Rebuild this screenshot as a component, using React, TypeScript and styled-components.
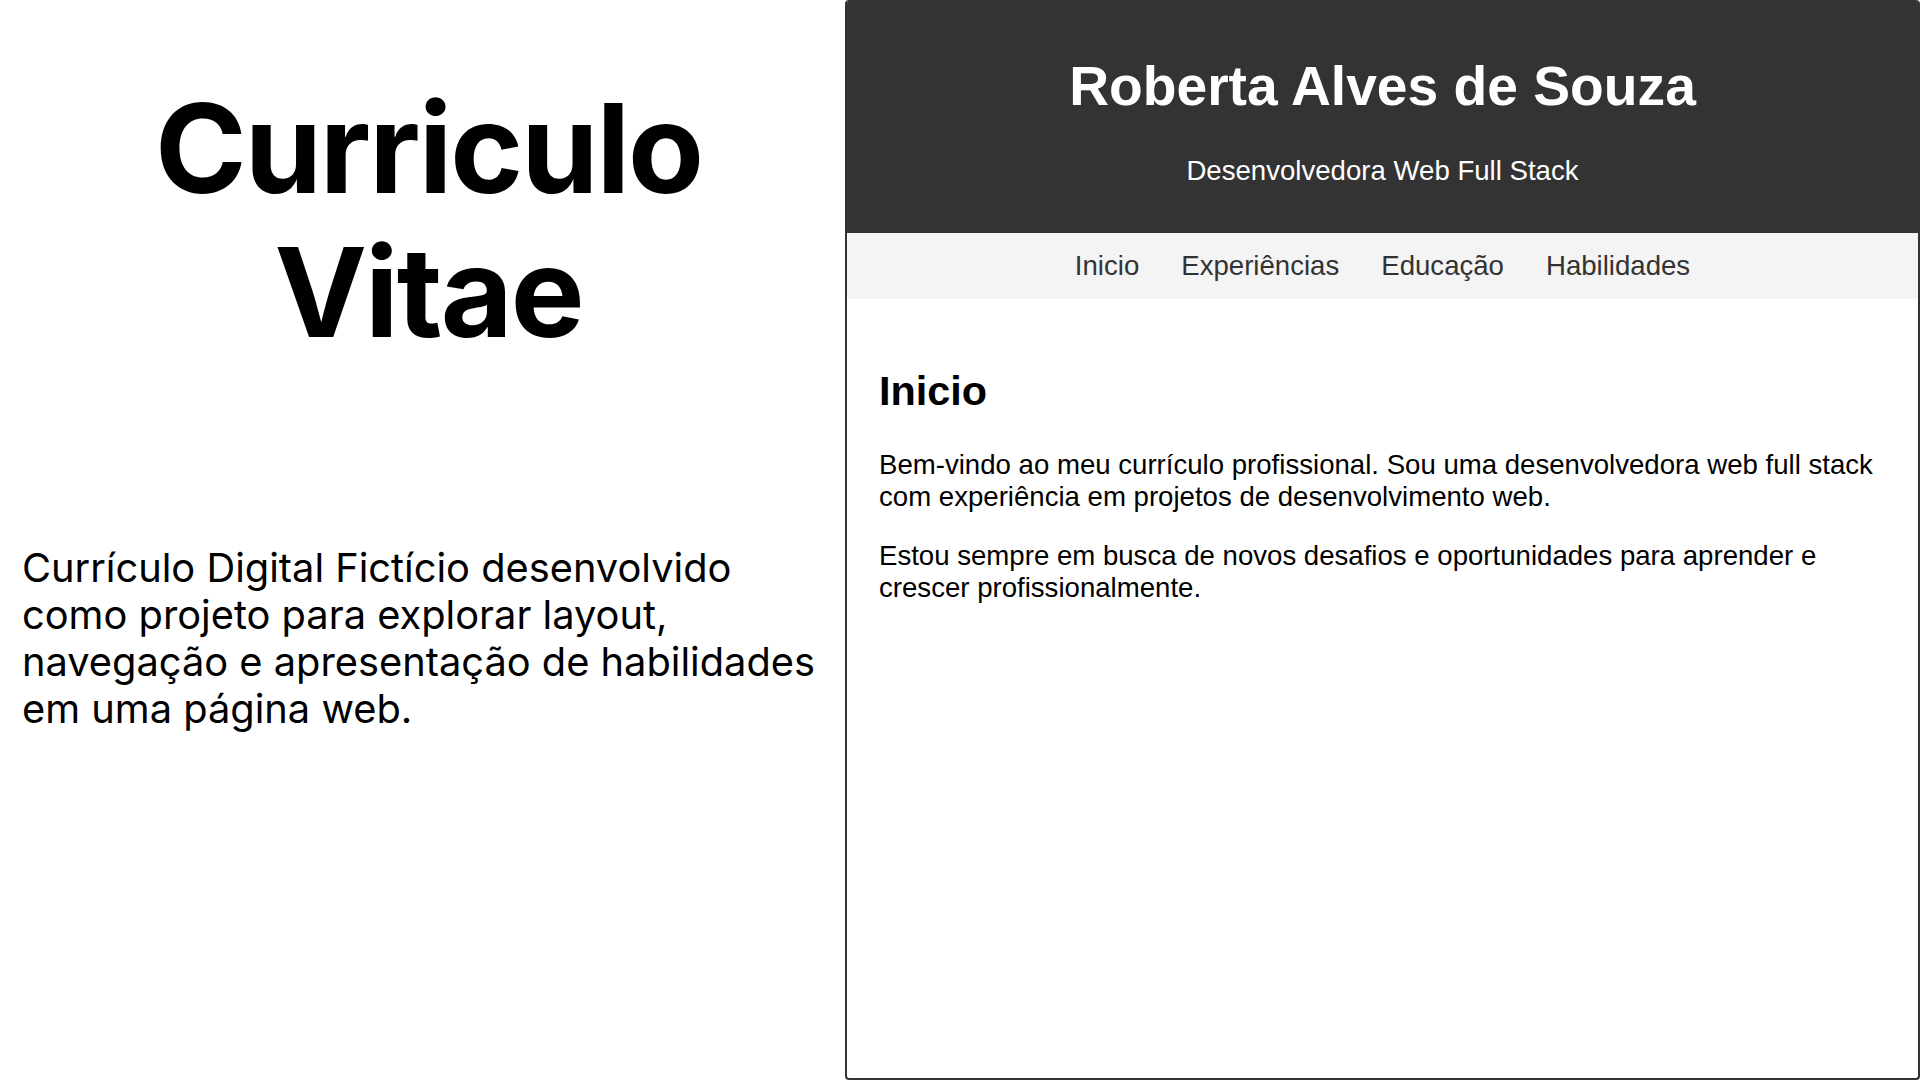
import React from "react";
import styled, { createGlobalStyle } from "styled-components";

const GlobalStyle = createGlobalStyle`
  html, body {
    margin: 0;
    padding: 0;
    background: #ffffff;
  }
  #root {
    width: 1920px;
    height: 1080px;
  }
  * {
    box-sizing: border-box;
  }
`;

const Page = styled.div`
  display: grid;
  grid-template-columns: 845px 1075px;
  width: 1920px;
  height: 1080px;
  overflow: hidden;
  background: #ffffff;
`;

const Intro = styled.section`
  padding: 76px 10px 0 22px;
  font-family: Inter, "Noto Sans", sans-serif;
  color: #000000;
`;

const Title = styled.h1`
  margin: 0;
  font-size: 124px;
  line-height: 144px;
  font-weight: 700;
  letter-spacing: -2px;
  text-align: center;
`;

const Lead = styled.p`
  margin: 180px 0 0;
  font-size: 39.8px;
  line-height: 47px;
  font-weight: 400;
  white-space: nowrap;
`;

const Frame = styled.div`
  display: flex;
  flex-direction: column;
  height: 1080px;
  border: 2px solid #333333;
  border-top-width: 0;
  border-radius: 4px;
  overflow: hidden;
  background: #ffffff;
  font-family: "Liberation Sans", Arial, sans-serif;
`;

const Header = styled.header`
  background: #333333;
  color: #ffffff;
  text-align: center;
  padding: 17.25px 0 18px;
`;

const Name = styled.h1`
  margin: 37px 0;
  font-size: 55.2px;
  font-weight: 700;
  line-height: normal;
`;

const Role = styled.p`
  margin: 27.6px 0;
  font-size: 27.6px;
  line-height: normal;
`;

const Nav = styled.nav`
  background: #f4f4f4;
  padding: 17px 0;
`;

const NavList = styled.ul`
  display: flex;
  justify-content: center;
  gap: 42px;
  margin: 0;
  padding: 0;
  list-style: none;
`;

const NavLink = styled.a`
  color: #333333;
  text-decoration: none;
  font-size: 27.6px;
  line-height: normal;
`;

const Main = styled.main`
  padding: 35px 34.5px 34.5px 32px;
  color: #000000;
`;

const SectionTitle = styled.h2`
  margin: 34.4px 0 33.4px;
  font-size: 41.4px;
  font-weight: 700;
  line-height: normal;
`;

const Text = styled.p`
  margin: 27px 0;
  font-size: 27.6px;
  line-height: normal;
`;

const links = ["Inicio", "Experiências", "Educação", "Habilidades"];

export default function App() {
  return (
    <>
      <GlobalStyle />
      <Page>
        <Intro>
          <Title>
            Curriculo
            <br />
            Vitae
          </Title>
          <Lead>
            Currículo Digital Fictício desenvolvido
            <br />
            como projeto para explorar layout,
            <br />
            navegação e apresentação de habilidades
            <br />
            em uma página web.
          </Lead>
        </Intro>
        <Frame>
          <Header>
            <Name>Roberta Alves de Souza</Name>
            <Role>Desenvolvedora Web Full Stack</Role>
          </Header>
          <Nav>
            <NavList>
              {links.map((l) => (
                <li key={l}>
                  <NavLink href="#">{l}</NavLink>
                </li>
              ))}
            </NavList>
          </Nav>
          <Main>
            <section>
              <SectionTitle>Inicio</SectionTitle>
              <Text>
                Bem-vindo ao meu currículo profissional. Sou uma desenvolvedora
                web full stack com experiência em projetos de desenvolvimento
                web.
              </Text>
              <Text>
                Estou sempre em busca de novos desafios e oportunidades para
                aprender e crescer profissionalmente.
              </Text>
            </section>
          </Main>
        </Frame>
      </Page>
    </>
  );
}
